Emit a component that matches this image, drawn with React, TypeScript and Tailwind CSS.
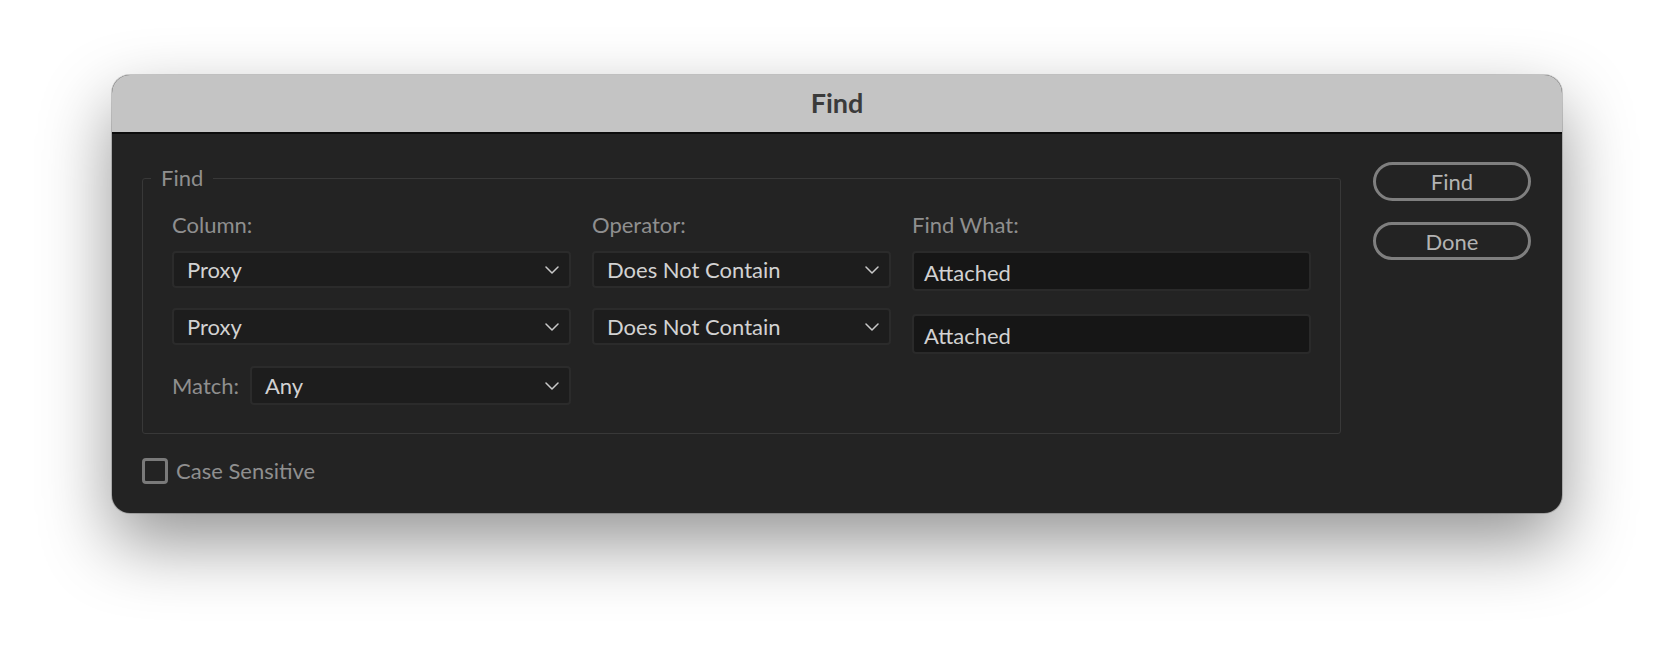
import React from 'react';

const font = { fontFamily: 'Lato, "Noto Sans", "Liberation Sans", sans-serif' };

const Chevron: React.FC = () => (
  <svg width="14" height="8" viewBox="0 0 14 8" fill="none" className="shrink-0">
    <path d="M1 1l6 6 6-6" stroke="#c9c9c9" strokeWidth="1.5" strokeLinecap="round" strokeLinejoin="round" />
  </svg>
);

const Select: React.FC<{ value: string; className?: string }> = ({ value, className = '' }) => (
  <div
    className={`flex items-center justify-between rounded-[4px] border-2 border-[#2b2b2b] bg-[#1d1d1d] pl-[13px] pr-[10px] text-[22px] text-[#d2d2d2] ${className}`}
  >
    <span className="leading-none">{value}</span>
    <Chevron />
  </div>
);

const TextBox: React.FC<{ value: string; className?: string }> = ({ value, className = '' }) => (
  <div
    className={`flex h-[40px] items-center rounded-[4px] border-2 border-[#2a2a2a] bg-[#161616] pl-[10px] pt-[4px] text-[22px] text-[#d2d2d2] ${className}`}
  >
    <span className="leading-none">{value}</span>
  </div>
);

export default function App() {
  return (
    <div className="flex h-[662px] w-full bg-white pl-[112px] pt-[75px]" style={font}>
      <div className="flex h-[438px] w-[1450px] flex-col overflow-hidden rounded-[18px] bg-[#232323] shadow-[0_30px_70px_rgba(0,0,0,0.42),0_0_0_1px_rgba(0,0,0,0.18)]">
        {/* Title bar */}
        <div className="flex h-[59px] shrink-0 items-center justify-center border-b-2 border-[#0c0c0c] bg-[#c4c4c4]">
          <span className="text-[27px] font-bold text-[#3b3b3b]">Find</span>
        </div>

        {/* Body */}
        <div className="flex flex-1 pl-[30px] pr-[31px]">
          <div className="flex flex-1 flex-col pt-[44px]">
            {/* Fieldset */}
            <div className="relative rounded-[3px] border border-[#383838] px-[29px] pb-[28px] pt-[33px]">
              <span className="absolute left-[8px] top-[-16px] bg-[#232323] px-[10px] text-[22px] leading-[30px] text-[#8f8f8f]">
                Find
              </span>
              <div className="flex gap-[21px]">
                <div className="flex w-[399px] flex-col">
                  <span className="text-[22px] leading-[26px] text-[#8f8f8f]">Column:</span>
                  <Select value="Proxy" className="mt-[13px] h-[37px]" />
                  <Select value="Proxy" className="mt-[20px] h-[37px]" />
                  <div className="mt-[21px] flex items-center">
                    <span className="w-[78px] text-[22px] text-[#8f8f8f]">Match:</span>
                    <Select value="Any" className="h-[39px] flex-1" />
                  </div>
                </div>
                <div className="flex w-[299px] flex-col">
                  <span className="text-[22px] leading-[26px] text-[#8f8f8f]">Operator:</span>
                  <Select value="Does Not Contain" className="mt-[13px] h-[37px]" />
                  <Select value="Does Not Contain" className="mt-[20px] h-[37px]" />
                </div>
                <div className="flex w-[399px] flex-col">
                  <span className="text-[22px] leading-[26px] text-[#8f8f8f]">Find What:</span>
                  <TextBox value="Attached" className="mt-[13px]" />
                  <TextBox value="Attached" className="mt-[23px]" />
                </div>
              </div>
            </div>

            {/* Case sensitive */}
            <div className="mt-[20px] flex items-center gap-[8px]">
              <div className="h-[26px] w-[26px] rounded-[4px] border-[3px] border-[#7a7a7a]" />
              <span className="text-[22px] text-[#8f8f8f]">Case Sensitive</span>
            </div>
          </div>

          {/* Buttons */}
          <div className="ml-[32px] flex w-[158px] flex-col gap-[21px] pt-[28px]">
            <button className="h-[39px] rounded-full border-[3px] border-[#7f7f7f] text-[22px] text-[#b3b3b3]">
              Find
            </button>
            <button className="h-[38px] rounded-full border-[3px] border-[#7f7f7f] text-[22px] text-[#b3b3b3]">
              Done
            </button>
          </div>
        </div>
      </div>
    </div>
  );
}
